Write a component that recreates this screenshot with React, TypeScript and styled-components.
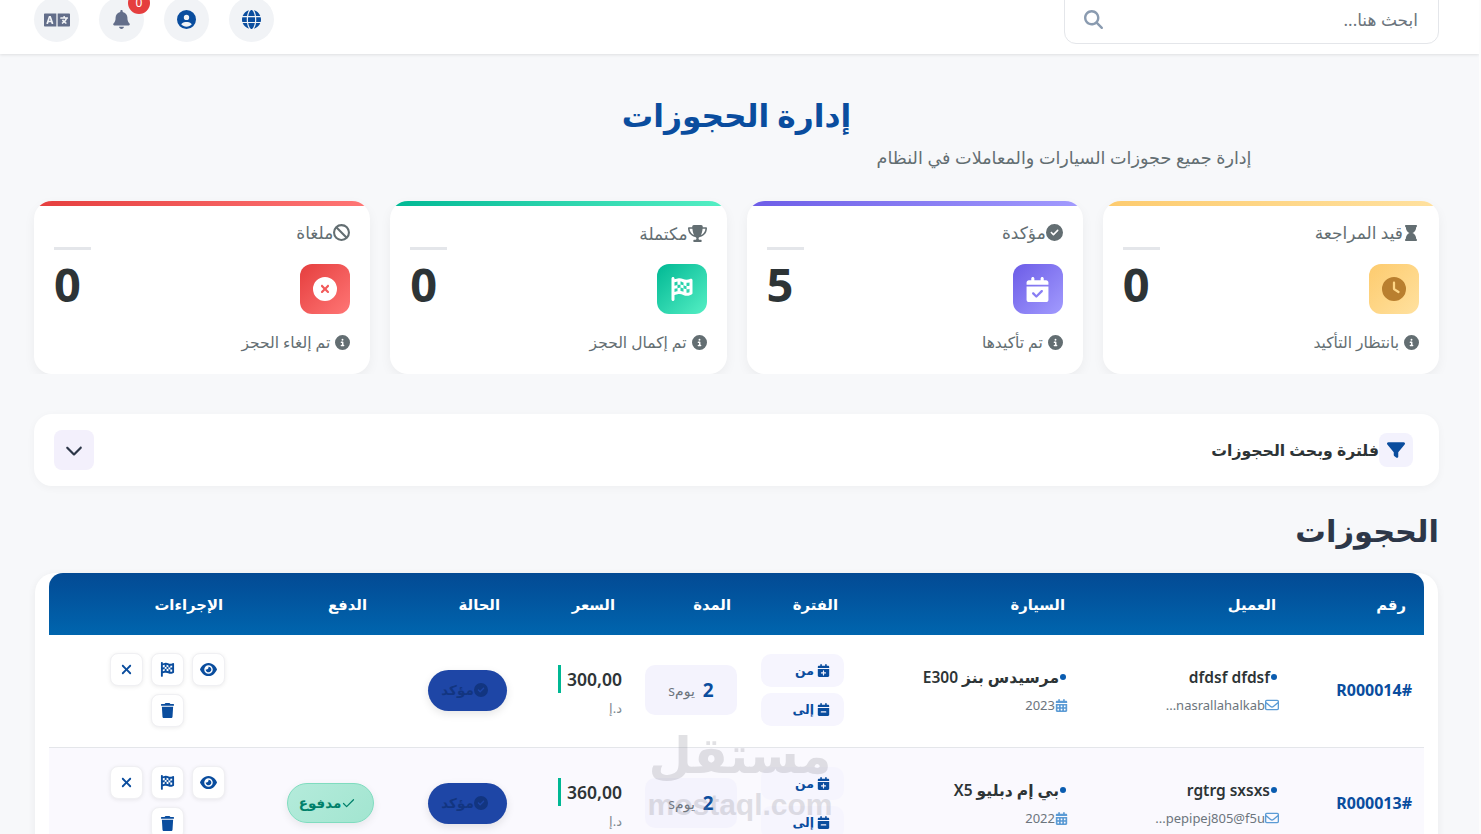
import React from 'react'
import styled, { createGlobalStyle } from 'styled-components'
import { FaHourglass, FaLanguage } from 'react-icons/fa'
import {
  FaBan,
  FaBell,
  FaCalendarCheck,
  FaCalendarDays,
  FaCalendarMinus,
  FaCalendarPlus,
  FaChevronDown,
  FaCircleCheck,
  FaCircleInfo,
  FaCircleUser,
  FaCircleXmark,
  FaClock,
  FaEye,
  FaFilter,
  FaFlagCheckered,
  FaGlobe,
  FaMagnifyingGlass,
  FaRegEnvelope,
  FaTrash,
  FaTrophy,
  FaXmark,
} from 'react-icons/fa6'
import { Check } from 'lucide-react'

const primary = '#0a4d9e'
const font = `"Noto Sans", "DejaVu Sans", sans-serif`

const GlobalStyle = createGlobalStyle`
  html, body {
    margin: 0;
    padding: 0;
    height: 834px;
    overflow: hidden;
    background: #fcfcfc;
  }
  * {
    box-sizing: border-box;
  }
`

type Stat = {
  title: string
  note: string
  value: number
  from: string
  to: string
  titleIcon: React.ReactNode
  mainIcon: React.ReactNode
}

const stats: Stat[] = [
  {
    title: 'قيد المراجعة',
    note: 'بانتظار التأكيد',
    value: 0,
    from: '#fdcb6e',
    to: '#ffe19f',
    titleIcon: <FaHourglass size={16} />,
    mainIcon: <FaClock color="#b97f2f" size={24} />,
  },
  {
    title: 'مؤكدة',
    note: 'تم تأكيدها',
    value: 5,
    from: '#6c5ce7',
    to: '#a29bfe',
    titleIcon: <FaCircleCheck size={17} />,
    mainIcon: <FaCalendarCheck color="#fff" size={25} />,
  },
  {
    title: 'مكتملة',
    note: 'تم إكمال الحجز',
    value: 0,
    from: '#00b894',
    to: '#55efc4',
    titleIcon: <FaTrophy size={19} />,
    mainIcon: <FaFlagCheckered color="#fff" size={24} />,
  },
  {
    title: 'ملغاة',
    note: 'تم إلغاء الحجز',
    value: 0,
    from: '#e53e3e',
    to: '#ff7675',
    titleIcon: <FaBan size={17} />,
    mainIcon: <FaCircleXmark color="#fff" size={24} />,
  },
]

type Booking = {
  id: string
  name: string
  email: string
  car: string
  year: string
  price: string
  paid: boolean
}

const bookings: Booking[] = [
  {
    id: 'R000014#',
    name: 'dfdsf dfdsf',
    email: '...nasrallahalkab',
    car: 'مرسيدس بنز E300',
    year: '2023',
    price: '300,00',
    paid: false,
  },
  {
    id: 'R000013#',
    name: 'rgtrg sxsxs',
    email: '...pepipej805@f5u',
    car: 'بي إم دبليو X5',
    year: '2022',
    price: '360,00',
    paid: true,
  },
]

export default function App(): JSX.Element {
  return (
    <Page dir="rtl">
      <GlobalStyle />
      <TopBar>
        <SearchBox>
          <SearchText>ابحث هنا...</SearchText>
          <FaMagnifyingGlass color="#8a9bb0" size={19} />
        </SearchBox>
        <TopIcons>
          <RoundIcon $color={primary}>
            <FaGlobe size={19} />
          </RoundIcon>
          <RoundIcon $color={primary}>
            <FaCircleUser size={19} />
          </RoundIcon>
          <RoundIcon $color="#636e8a">
            <FaBell size={19} />
            <Badge>0</Badge>
          </RoundIcon>
          <RoundIcon $color="#636e8a">
            <FaLanguage size={26} />
          </RoundIcon>
        </TopIcons>
      </TopBar>

      <Main>
        <Title>إدارة الحجوزات</Title>
        <Subtitle>إدارة جميع حجوزات السيارات والمعاملات في النظام</Subtitle>

        <StatGrid>
          {stats.map((s) => (
            <StatCard key={s.title} $from={s.from} $to={s.to}>
              <StatTop>
                <StatTitle>
                  {s.titleIcon}
                  {s.title}
                </StatTitle>
                <StatDash />
              </StatTop>
              <StatMiddle>
                <StatIcon $from={s.from} $to={s.to}>
                  {s.mainIcon}
                </StatIcon>
                <StatValue>{s.value}</StatValue>
              </StatMiddle>
              <StatNote>
                <FaCircleInfo size={15} />
                {s.note}
              </StatNote>
            </StatCard>
          ))}
        </StatGrid>

        <FilterBar>
          <FilterTitle>
            <FilterIcon>
              <FaFilter size={18} />
            </FilterIcon>
            فلترة وبحث الحجوزات
          </FilterTitle>
          <Collapse>
            <FaChevronDown size={18} />
          </Collapse>
        </FilterBar>

        <SectionTitle>الحجوزات</SectionTitle>

        <TableCard>
          <Table>
            <colgroup>
              <col width={130} />
              <col width={211} />
              <col width={227} />
              <col width={107} />
              <col width={116} />
              <col width={115} />
              <col width={133} />
              <col width={144} />
              <col width={192} />
            </colgroup>
            <thead>
              <tr>
                <HeadCell>رقم</HeadCell>
                <HeadCell>العميل</HeadCell>
                <HeadCell>السيارة</HeadCell>
                <HeadCell>الفترة</HeadCell>
                <HeadCell>المدة</HeadCell>
                <HeadCell>السعر</HeadCell>
                <HeadCell>الحالة</HeadCell>
                <HeadCell>الدفع</HeadCell>
                <HeadCell>الإجراءات</HeadCell>
              </tr>
            </thead>
            <tbody>
              {bookings.map((b) => (
                <Row key={b.id}>
                  <Cell>
                    <BookingId>{b.id}</BookingId>
                  </Cell>
                  <Cell>
                    <InfoBlock>
                      <MainLine>
                        <Dot />
                        {b.name}
                      </MainLine>
                      <SubLine>
                        <FaRegEnvelope color="#5b9bd5" size={14} />
                        <span dir="ltr">{b.email}</span>
                      </SubLine>
                    </InfoBlock>
                  </Cell>
                  <Cell>
                    <InfoBlock>
                      <MainLine>
                        <Dot />
                        {b.car}
                      </MainLine>
                      <SubLine>
                        <FaCalendarDays color="#5b9bd5" size={13} />
                        {b.year}
                      </SubLine>
                    </InfoBlock>
                  </Cell>
                  <Cell>
                    <DateChip>
                      <FaCalendarPlus size={13} />
                      من
                    </DateChip>
                    <DateChip>
                      <FaCalendarMinus size={13} />
                      إلى
                    </DateChip>
                  </Cell>
                  <Cell>
                    <Duration>
                      <strong>2</strong>
                      <span>يومs</span>
                    </Duration>
                  </Cell>
                  <Cell>
                    <Price>{b.price}</Price>
                    <Currency>د.إ</Currency>
                  </Cell>
                  <Cell>
                    <StatusPill>
                      <FaCircleCheck size={14} />
                      مؤكد
                    </StatusPill>
                  </Cell>
                  <Cell>
                    {b.paid && (
                      <PaidPill>
                        <Check size={15} strokeWidth={2} />
                        مدفوع
                      </PaidPill>
                    )}
                  </Cell>
                  <Cell>
                    <Actions>
                      <ActionButton>
                        <FaEye size={17} />
                      </ActionButton>
                      <ActionButton>
                        <FaFlagCheckered size={15} />
                      </ActionButton>
                      <ActionButton>
                        <FaXmark size={15} />
                      </ActionButton>
                      <ActionButton>
                        <FaTrash size={15} />
                      </ActionButton>
                    </Actions>
                  </Cell>
                </Row>
              ))}
            </tbody>
          </Table>
        </TableCard>
      </Main>

      <Watermark>
        <WatermarkLogo>مستقل</WatermarkLogo>
        <WatermarkUrl>mostaql.com</WatermarkUrl>
      </Watermark>
    </Page>
  )
}

const Page = styled.div`
  position: relative;
  width: 1479px;
  height: 834px;
  overflow: hidden;
  background: #f7f8fa;
  font-family: ${font};
  color: #2d3436;
`

const TopBar = styled.header`
  height: 54px;
  padding: 0 40px 10px 34px;
  background: #fff;
  box-shadow: 0 1px 3px rgba(0, 0, 0, 0.1);
  display: flex;
  align-items: flex-end;
  justify-content: space-between;
  overflow: hidden;
`

const SearchBox = styled.div`
  flex: none;
  width: 375px;
  height: 60px;
  padding: 25px 20px 0 19px;
  border: 1px solid #e4e6ea;
  border-radius: 12px;
  background: #fff;
  display: flex;
  align-items: flex-start;
  justify-content: space-between;
`

const SearchText = styled.span`
  font-size: 17px;
  line-height: 22px;
  margin-top: -1px;
  color: #6c757d;
`

const TopIcons = styled.div`
  display: flex;
  gap: 20px;
  margin-bottom: 2px;
`

const RoundIcon = styled.span<{ $color: string }>`
  position: relative;
  width: 45px;
  height: 45px;
  border-radius: 50%;
  background: #f1f3f6;
  color: ${(p) => p.$color};
  display: flex;
  align-items: center;
  justify-content: center;
`

const Badge = styled.span`
  position: absolute;
  top: -5px;
  left: 29px;
  width: 22px;
  height: 22px;
  border-radius: 50%;
  background: #e53e3e;
  color: #fff;
  font-size: 12px;
  line-height: 22px;
  text-align: center;
`

const Main = styled.main`
  padding: 38px 40px 0 34px;
`

const Title = styled.h1`
  margin: 0;
  text-align: center;
  font-size: 31.3px;
  line-height: 46px;
  font-weight: 700;
  color: ${primary};
`

const Subtitle = styled.p`
  width: 1030px;
  margin: 7px auto 0;
  font-size: 17.6px;
  line-height: 24px;
  color: #636e72;
`

const StatGrid = styled.section`
  margin-top: 32px;
  display: grid;
  grid-template-columns: repeat(4, 1fr);
  gap: 20px;
  clip-path: inset(-20px -20px 0 -20px);
`

const StatCard = styled.article<{ $from: string; $to: string }>`
  position: relative;
  height: 173px;
  padding: 25px 20px 20px;
  border-radius: 18px;
  background: #fff;
  box-shadow: 0 4px 12px rgba(0, 0, 0, 0.05);
  overflow: hidden;

  &::before {
    content: '';
    position: absolute;
    top: 0;
    left: 0;
    right: 0;
    height: 5px;
    background: linear-gradient(90deg, ${(p) => p.$from}, ${(p) => p.$to});
  }
`

const StatTop = styled.div`
  display: flex;
  justify-content: space-between;
  align-items: flex-start;
  height: 38px;
`

const StatTitle = styled.div`
  margin-top: -2px;
  display: flex;
  align-items: center;
  font-size: 17px;
  line-height: 17px;
  color: #636e72;
`

const StatDash = styled.span`
  width: 37px;
  height: 3px;
  margin-top: 21px;
  background: #e4e6ea;
`

const StatMiddle = styled.div`
  display: flex;
  justify-content: space-between;
  align-items: flex-start;
`

const StatIcon = styled.span<{ $from: string; $to: string }>`
  width: 50px;
  height: 50px;
  border-radius: 12px;
  background: linear-gradient(135deg, ${(p) => p.$from}, ${(p) => p.$to});
  display: flex;
  align-items: center;
  justify-content: center;
`

const StatValue = styled.div`
  margin-top: -3px;
  font-size: 47px;
  line-height: 46px;
  font-weight: 700;
  color: #2d3436;
`

const StatNote = styled.div`
  margin-top: 18px;
  display: flex;
  align-items: center;
  gap: 5px;
  font-size: 15.5px;
  line-height: 20px;
  color: #636e72;
`

const FilterBar = styled.section`
  margin-top: 40px;
  height: 72px;
  padding: 0 26px 0 20px;
  border-radius: 18px;
  background: #fff;
  box-shadow: 0 2px 8px rgba(0, 0, 0, 0.04);
  display: flex;
  align-items: center;
  justify-content: space-between;
`

const FilterTitle = styled.div`
  display: flex;
  align-items: center;
  font-size: 15.7px;
  font-weight: 700;
  color: #2d3436;
`

const FilterIcon = styled.span`
  width: 34px;
  height: 34px;
  border-radius: 8px;
  background: #f3f2fd;
  color: ${primary};
  display: flex;
  align-items: center;
  justify-content: center;
`

const Collapse = styled.span`
  width: 40px;
  height: 40px;
  border-radius: 8px;
  background: #f3f0fc;
  color: #2d3748;
  display: flex;
  align-items: center;
  justify-content: center;
`

const SectionTitle = styled.h2`
  margin: 23px 0 0;
  font-size: 30.5px;
  line-height: 42px;
  font-weight: 700;
  color: #2d3748;
`

const TableCard = styled.section`
  margin: 22px 1px 0;
  padding: 0 14px;
  border-radius: 20px;
  background: #fff;
  box-shadow: 0 2px 8px rgba(0, 0, 0, 0.06);
`

const Table = styled.table`
  width: 1375px;
  border-collapse: separate;
  border-spacing: 0;
  table-layout: fixed;
`

const HeadCell = styled.th`
  height: 62px;
  padding: 0 18px;
  background: linear-gradient(180deg, #034a94, #0065ae);
  color: #fff;
  font-size: 14.8px;
  font-weight: 700;
  text-align: right;
  &:first-child {
    border-top-right-radius: 14px;
  }
  &:last-child {
    border-top-left-radius: 14px;
  }
`

const Row = styled.tr`
  background: #fff;
  &:nth-child(even) {
    background: #faf9fe;
  }
`

const Cell = styled.td`
  height: 113px;
  padding: 17px 12px 19px;
  border-bottom: 1px solid #e4e6ea;
  vertical-align: middle;
  text-align: right;
`

const BookingId = styled.span`
  font-size: 16px;
  font-weight: 700;
  color: ${primary};
`

const InfoBlock = styled.div`
  padding-right: 3px;
`

const MainLine = styled.div`
  padding-right: 2px;
  display: flex;
  align-items: center;
  gap: 1px;
  font-size: 15.5px;
  font-weight: 600;
  color: #2d3436;
`

const Dot = styled.span`
  width: 6px;
  height: 6px;
  border-radius: 50%;
  background: #0a5cb0;
`

const SubLine = styled.div`
  margin-top: 8px;
  display: flex;
  align-items: center;
  font-size: 13px;
  color: #6c757d;
`

const DateChip = styled.div`
  height: 33px;
  padding: 0 14px;
  border-radius: 10px;
  background: #f6f5fe;
  color: ${primary};
  font-size: 12.5px;
  font-weight: 600;
  display: flex;
  align-items: center;
  gap: 3px;
  & + & {
    margin-top: 6px;
  }
`

const Duration = styled.div`
  height: 50px;
  border-radius: 10px;
  background: #f4f3fd;
  display: flex;
  align-items: center;
  justify-content: center;
  gap: 8px;
  font-size: 14px;
  color: #6c757d;
  strong {
    font-size: 19px;
    color: ${primary};
  }
`

const Price = styled.div`
  margin-right: -1px;
  padding-left: 6px;
  border-left: 3px solid #00b894;
  width: fit-content;
  font-size: 17.5px;
  line-height: 28px;
  font-weight: 600;
  color: #2d3436;
`

const Currency = styled.div`
  margin-top: 7px;
  margin-right: -1px;
  font-size: 13px;
  line-height: 16px;
  color: #7f8a90;
`

const StatusPill = styled.div`
  width: 79px;
  height: 41px;
  margin: 0 -1px 0 auto;
  padding-right: 6px;
  border-radius: 21px;
  background: #1e46a6;
  color: #123580;
  box-shadow: 0 3px 8px rgba(0, 0, 0, 0.1);
  font-size: 13.5px;
  font-weight: 700;
  display: flex;
  align-items: center;
  justify-content: center;
`

const PaidPill = styled.div`
  width: 87px;
  height: 40px;
  margin: 0 -1px 0 auto;
  padding-right: 6px;
  border: 1px solid #7fdcbf;
  border-radius: 20px;
  background: linear-gradient(135deg, #b4ebdb, #a2e5d0);
  color: #00806a;
  box-shadow: 0 3px 8px rgba(0, 0, 0, 0.08);
  font-size: 13.5px;
  font-weight: 700;
  display: flex;
  align-items: center;
  justify-content: center;
`

const Actions = styled.div`
  width: 116px;
  margin-right: 4px;
  display: flex;
  flex-wrap: wrap;
  justify-content: center;
  gap: 8px;
`

const ActionButton = styled.button`
  width: 33px;
  height: 33px;
  padding: 0;
  border: 1px solid #f0f0f3;
  border-radius: 8px;
  background: #fff;
  color: ${primary};
  box-shadow: 0 1px 4px rgba(0, 0, 0, 0.08);
  display: flex;
  align-items: center;
  justify-content: center;
`

const Watermark = styled.div`
  position: absolute;
  left: 645px;
  top: 722px;
  width: 190px;
  color: #8c8c96;
  opacity: 0.25;
  text-align: center;
  pointer-events: none;
`

const WatermarkLogo = styled.div`
  font-size: 50px;
  line-height: 64px;
  font-weight: 700;
`

const WatermarkUrl = styled.div`
  margin-top: 3px;
  font-size: 30px;
  line-height: 32px;
  font-weight: 700;
  font-family: "Liberation Sans", sans-serif;
`
